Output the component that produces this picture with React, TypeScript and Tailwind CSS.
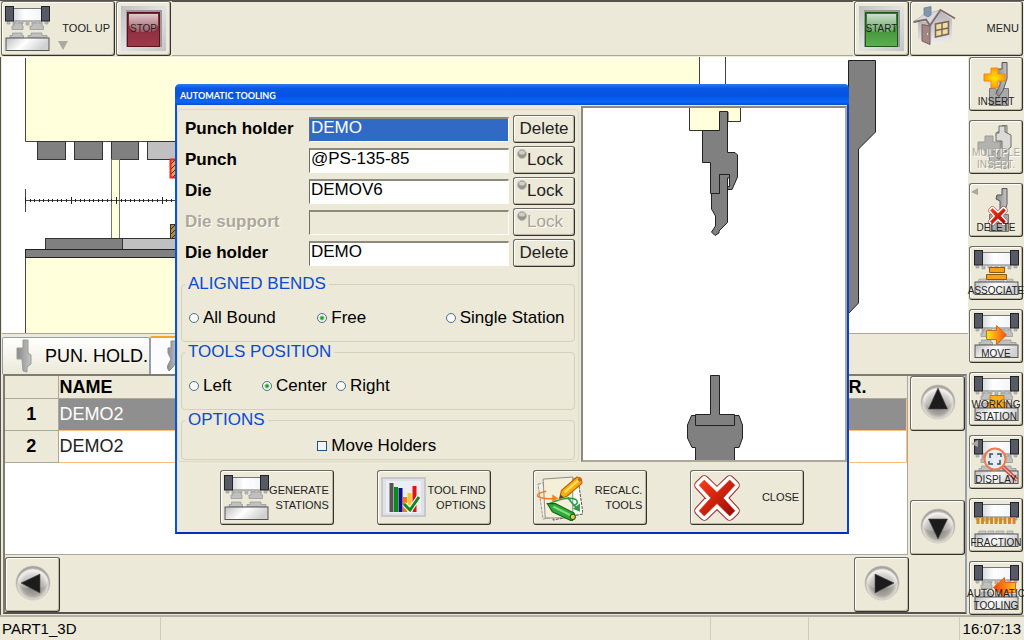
import React from "react";

const face =
  "border border-[#6d6b62] border-r-[#33322e] border-b-[#33322e] rounded-[3px] bg-[#ece9d8] shadow-[inset_1px_1px_0_#ffffff,inset_-1px_-1px_0_#b9b6a4] text-[#222] cursor-default";

function Defs() {
  return (
    <svg className="absolute size-0" aria-hidden="true">
      <defs>
        <linearGradient id="base" x1="0" y1="0" x2="1" y2="0.3">
          <stop offset="0" stopColor="#bdbdbd" />
          <stop offset="0.5" stopColor="#ffffff" />
          <stop offset="1" stopColor="#d0d0d0" />
        </linearGradient>
        <linearGradient id="beam" x1="0" y1="0" x2="1" y2="0">
          <stop offset="0" stopColor="#d6dade" />
          <stop offset="0.4" stopColor="#ffffff" />
          <stop offset="1" stopColor="#f2f4f6" />
        </linearGradient>
        <linearGradient id="fire" x1="0" y1="0" x2="1" y2="0">
          <stop offset="0" stopColor="#ffe81a" />
          <stop offset="1" stopColor="#ff4a12" />
        </linearGradient>
        <linearGradient id="fireBack" x1="0" y1="0" x2="1" y2="0">
          <stop offset="0" stopColor="#ff3c10" />
          <stop offset="1" stopColor="#ffc21a" />
        </linearGradient>
        <linearGradient id="red" x1="0" y1="0" x2="1" y2="1">
          <stop offset="0" stopColor="#ff3a1a" />
          <stop offset="1" stopColor="#990a00" />
        </linearGradient>
        <radialGradient id="plus">
          <stop offset="0" stopColor="#ffe600" />
          <stop offset="1" stopColor="#ff9a10" />
        </radialGradient>
        <radialGradient id="ball" cx="0.5" cy="0.55" r="0.5">
          <stop offset="0" stopColor="#77756f" />
          <stop offset="0.65" stopColor="#a8a69f" />
          <stop offset="0.88" stopColor="#dedcd4" />
          <stop offset="1" stopColor="#a5a39b" />
        </radialGradient>
        <linearGradient id="gloss" x1="0" y1="0" x2="0" y2="1">
          <stop offset="0" stopColor="#ffffff" stopOpacity="0.95" />
          <stop offset="1" stopColor="#ffffff" stopOpacity="0.25" />
        </linearGradient>
        <linearGradient id="frame" x1="0" y1="0" x2="1" y2="1">
          <stop offset="0" stopColor="#bfbfbf" />
          <stop offset="0.5" stopColor="#e2e2e2" />
          <stop offset="1" stopColor="#c4c4c4" />
        </linearGradient>
        <linearGradient id="stopFill" x1="0" y1="0" x2="0" y2="1">
          <stop offset="0" stopColor="#7e2331" />
          <stop offset="1" stopColor="#9c3a4b" />
        </linearGradient>
        <linearGradient id="startFill" x1="0" y1="0" x2="0" y2="1">
          <stop offset="0" stopColor="#2d7a2a" />
          <stop offset="1" stopColor="#5cb04e" />
        </linearGradient>
        <linearGradient id="wall" x1="0" y1="0" x2="0" y2="1">
          <stop offset="0" stopColor="#b4b4b8" />
          <stop offset="1" stopColor="#eeeeec" />
        </linearGradient>
        <linearGradient id="metal" x1="0" y1="0" x2="1" y2="0">
          <stop offset="0" stopColor="#8a8a8a" />
          <stop offset="1" stopColor="#c4c4c4" />
        </linearGradient>
        <pattern id="hatch" width="5" height="5" patternUnits="userSpaceOnUse">
          <path d="M-1 6 L6 -1" stroke="#3a2a10" strokeWidth="1" />
        </pattern>
      </defs>
    </svg>
  );
}

function Press({ children, tools = true }: { children?: React.ReactNode; tools?: boolean }) {
  return (
    <svg viewBox="0 0 45 45" className="size-[45px] shrink-0" aria-hidden="true">
      <rect x="8" y="2.5" width="29" height="12.5" fill="url(#beam)" stroke="#777" />
      <path d="M2 15v3h3v-3M8 15v4h3v-4M14 15v3h4v-3M21 15v4h3v-4M27 15v3h4v-3M34 15v4h3v-4M40 15v3h3v-3" fill="#b8b8b8" stroke="#999" strokeWidth="0.6" />
      <rect x="0.5" y="0.5" width="8" height="14.5" fill="#555a66" stroke="#222" />
      <rect x="36.5" y="0.5" width="8" height="14.5" fill="#555a66" stroke="#222" />
      {tools && (
        <g fill="#c0c0c0" stroke="#999" strokeWidth="0.8">
          <path d="M9 17h8v3h1v3.500H7v-3.500h2zM27 17h10v3h1.500v3.500H25v-3.500h2z" />
          <path d="M7.500 27h9.500v2.500h1.500V32H5v-2.500h2.500zM26 27h11v2.500h5V32H23v-2.500h3z" />
        </g>
      )}
      {!tools && <path d="M5 29h7v3H4zM14 29h6v3h-6zM22 29h8v3h-8zM33 29h6v3h-6z" fill="#c9c9c9" stroke="#999" strokeWidth="0.6" />}
      <rect x="1" y="32" width="43" height="12.500" fill="url(#base)" stroke="#555" />
      {children}
    </svg>
  );
}

function Cross({ className }: { className: string }) {
  const d = "M5 10 L10 5 L22.500 17 L35 5 L40 10 L28.500 22.500 L40 35 L35 40 L22.500 28 L10 40 L5 35 L16.500 22.500Z";
  return (
    <svg viewBox="0 0 45 45" className={className} aria-hidden="true">
      <path d={d} fill="#fff" stroke="#9e2a2a" strokeWidth="9.500" strokeLinejoin="round" />
      <path d={d} fill="#fff" stroke="#fff" strokeWidth="7.500" strokeLinejoin="round" />
      <path d={d} fill="url(#red)" stroke="url(#red)" strokeWidth="0.600" />
    </svg>
  );
}

function Punch({ children, faded }: { children?: React.ReactNode; faded?: boolean }) {
  return (
    <svg viewBox="0 0 45 45" className="size-[45px] shrink-0" aria-hidden="true" opacity={faded ? 0.75 : 1}>
      <path d="M15.500 27.500h6l3.500 6 4-6h5.500v17h-19z" fill="#a9a9a9" stroke="#777" />
      <path d="M28 1.500h5v16l-4 12-4 6-3-3 4-9V14l-4-2 1-4h5z" fill="url(#metal)" stroke="#555" />
      {children}
    </svg>
  );
}

function Lamp({ kind }: { kind: "stop" | "start" }) {
  return (
    <svg viewBox="0 0 45 45" className="size-[45px]" aria-hidden="true">
      <rect width="45" height="45" fill="url(#frame)" />
      <rect x="5" y="4" width="36" height="37" fill="#9a9a9a" />
      <rect x="6.500" y="6.500" width="32" height="34" fill={kind === "stop" ? "url(#stopFill)" : "url(#startFill)"} stroke={kind === "stop" ? "#5d0f1c" : "#1c5a1c"} />
      <path d="M8 8h29v11q-2 7-8 7H16q-6 0-8-7z" fill="url(#gloss)" opacity="0.8" />
    </svg>
  );
}

function House() {
  return (
    <svg viewBox="0 0 45 45" className="size-[45px]" aria-hidden="true">
      <path d="M5 16l15-1v24l-15-6z" fill="url(#wall)" />
      <path d="M19 16L27 5l12 8v21l-20 5z" fill="url(#wall)" />
      <path d="M0.500 16L10 9l17-5-8 12-2 3-3-5z" fill="#dadadd" stroke="#b5b2b5" strokeWidth="0.800" />
      <path d="M11 2l7-1.500V9l-3 2-4-2z" fill="#8296ab" stroke="#6c7f94" strokeWidth="0.800" />
      <path d="M0.500 16L13 13.500l4 6L27.500 4 42 12.500" fill="none" stroke="#84696b" strokeWidth="1.800" />
      <path d="M9 18.500l8 1.500v18.500l-8-3.500z" fill="#a08684" stroke="#78605f" />
      <path d="M14.500 27v2" stroke="#e9dcb8" strokeWidth="1" />
      <path d="M22.500 18l13-2.500v12.500l-13 3z" fill="#f0dd9a" stroke="#7a6462" strokeWidth="1.600" />
      <path d="M29 17v13M22.500 24.500l13-2.500" stroke="#7a6462" strokeWidth="1.400" />
    </svg>
  );
}

function Charts() {
  return (
    <svg viewBox="0 0 45 45" className="size-[45px] shrink-0" aria-hidden="true">
      <rect x="1" y="3" width="43" height="38" fill="#dfe1e6" stroke="#c6c8cd" strokeWidth="2" />
      <rect x="5" y="6" width="35" height="32" fill="#eceef2" />
      <path d="M10.500 8v29" stroke="#555" strokeWidth="4" />
      <path d="M15 12v25" stroke="#0c8a16" strokeWidth="4" />
      <path d="M19.500 13v24" stroke="#10108c" strokeWidth="4" />
      <path d="M24 22v15" stroke="#ff7410" strokeWidth="4" />
      <path d="M28.500 18v19" stroke="#ffc62a" strokeWidth="4" />
      <path d="M33.500 11v26" stroke="#e01414" strokeWidth="4" />
      <path d="M23 29l6 6 9-13" fill="none" stroke="#fff" strokeWidth="5" />
      <path d="M23 29l6 6 9-13" fill="none" stroke="#108a20" strokeWidth="3" />
    </svg>
  );
}

function Sheets() {
  return (
    <svg viewBox="0 0 45 45" className="size-[46px] shrink-0" aria-hidden="true">
      <path d="M1 9l31-7 5 35-31 6z" fill="#f4f1e4" stroke="#999" strokeDasharray="3 1" />
      <path d="M12 8l28-5 5 35-29 6z" fill="#fdfcf6" stroke="#555" strokeDasharray="3 1" />
      <path d="M6 4l29-2v40H8z" fill="#f3efd8" stroke="#777" strokeWidth="0.8" />
      <path d="M9 16q-10 2-8 5 4 3 16 2" fill="none" stroke="#ff7a1a" strokeWidth="1.500" />
      <path d="M15 19l6 4-6 3z" fill="#ff7a1a" />
      <path d="M12 28q18-8 26-4 4 4-3 6M30 22q6 8 11 12" fill="none" stroke="#2e9a48" strokeWidth="1.500" />
      <path d="M42 28v8l-7-3z" fill="#2e9a48" />
      <path d="M22 23l2-8L39 2q5 0 5 6L29 21z" fill="#ffac14" stroke="#a86400" />
      <path d="M27 17L42 4" stroke="#ffe25a" strokeWidth="2" />
      <path d="M22 23l1-4 3 3z" fill="#444" />
      <circle cx="42" cy="4.500" r="2" fill="#d65a2a" />
      <path d="M10 28l8 0 18 9q3 4-2 8L15 36z" fill="#2fa83c" stroke="#12611c" />
      <path d="M16 31l18 9" stroke="#8be07a" strokeWidth="2" />
      <circle cx="35" cy="41" r="2.500" fill="#f0c83a" stroke="#12611c" />
    </svg>
  );
}

function ArrowButton({ dir, label }: { dir: "up" | "down" | "left" | "right"; label: string }) {
  const tri = {
    up: "M18 4L27.500 25H8.500z",
    down: "M18 31L8.500 11H27.500z",
    left: "M6 18L25 9V28z",
    right: "M30 18L11 9V28z",
  }[dir];
  return (
    <button type="button" aria-label={label} className={`${face} grid h-[55px] w-[55px] shrink-0 place-items-center pb-1`}>
      <svg viewBox="0 0 36 36" className="size-9" aria-hidden="true">
        <circle cx="18" cy="18" r="17" fill="url(#ball)" stroke="#c4c2b8" strokeWidth="0.6" />
        <path d="M3 15a15.500 14 0 0 1 30 0q-2 8-9 8H12q-7 0-9-8z" fill="url(#gloss)" opacity="0.75" />
        <path d={tri} fill="#1c1c1c" stroke="#4c4c4c" strokeWidth="0.600" />
      </svg>
    </button>
  );
}

function SideButton({ icon, lines, disabled, flag }: { icon: React.ReactNode; lines: string[]; disabled?: boolean; flag?: boolean }) {
  return (
    <button type="button" disabled={disabled} className={`${face} grid h-[54px] w-[54px] shrink-0 grid-cols-[52px]`}>
      <span className="flex justify-center pt-[3px] [grid-area:1/1]">{icon}</span>
      {flag && (
        <svg viewBox="0 0 8 8" className="mt-1 ml-px size-2 [grid-area:1/1]" aria-hidden="true">
          <path d="M0 4L7 0V7z" fill="#aaa89c" />
        </svg>
      )}
      <span
        className={`relative flex flex-col items-center self-end justify-self-center pb-[2px] text-[10px] leading-3 [grid-area:1/1] ${disabled ? "text-[#aca899] [text-shadow:1px_1px_0_#fff]" : "text-[#222]"}`}
      >
        {lines.map((l) => (
          <span key={l}>{l}</span>
        ))}
      </span>
    </button>
  );
}

function MachineView() {
  const ticks = Array.from({ length: 33 }, (_, i) => i);
  return (
    <svg viewBox="2 57 966 276" preserveAspectRatio="xMinYMin slice" className="block h-[276px] w-full bg-white" role="img" aria-label="Machine view">
      <rect x="25.500" y="58" width="674" height="83" fill="#ffffdc" />
      <path d="M25.500 58V141.500H699.500V57M725.500 57V141" fill="none" stroke="#444" />
      <g fill="#808080" stroke="#333">
        <rect x="37.500" y="141.500" width="28" height="18" />
        <rect x="74.500" y="141.500" width="28" height="18" />
        <rect x="111.500" y="141.500" width="27" height="18" />
        <rect x="147.500" y="141.500" width="40" height="18" fill="#c0c0c0" />
      </g>
      <rect x="111.500" y="159.500" width="8" height="79" fill="#ffffdc" stroke="#777" />
      <rect x="170.500" y="159.500" width="20" height="18" fill="#f6a23c" />
      <rect x="170.500" y="159.500" width="20" height="18" fill="url(#hatch)" stroke="#ff1a1a" strokeWidth="2" />
      <path d="M25.500 189V212M25 200.500H180" stroke="#444" />
      {ticks.map((i) => (
        <path key={i} d={i % 10 === 0 ? "M0.500 197V204" : "M0.500 199V202"} transform={`translate(${25 + Math.round(i * 4.55)} 0)`} stroke="#222" />
      ))}
      <rect x="170.500" y="224.500" width="20" height="14" fill="#b98c2c" />
      <rect x="170.500" y="224.500" width="20" height="14" fill="url(#hatch)" stroke="#333" />
      <rect x="45.500" y="238.500" width="77" height="11" fill="#808080" stroke="#333" />
      <rect x="122.500" y="238.500" width="80" height="11" fill="#c0c0c0" stroke="#333" />
      <rect x="25.500" y="249.500" width="674" height="8" fill="#808080" stroke="#222" />
      <path d="M25.500 258H699.500V333H25.500z" fill="#ffffdc" />
      <path d="M25.500 258V333M699.500 258V333" stroke="#444" />
      <path d="M848.500 60.500H875.500V132L858.500 149V303L848.500 313.500z" fill="#808080" stroke="#222" />
    </svg>
  );
}

function ToolPreview() {
  return (
    <svg viewBox="583 108 262 352" preserveAspectRatio="xMidYMid slice" className="block h-full w-full" role="img" aria-label="Tool preview">
      <path d="M689.500 106V130.500H719.500V112H728V121.500H740.500V106z" fill="#ffffdc" stroke="#333" />
      <g fill="#808080" stroke="#222">
        <path d="M702.500 130.500H719.500V111.500H727.500V152.500H735L737.500 155V177L732 189.500H726.500V186.500H729.500V174.500H719.500V193.500H710.500V162.500H702.500z" />
        <path d="M719.500 174.500H729.500V178H727.500V222.500L719 231V233L715 235.500L711.500 232L715.500 226V216L711.500 209V193.500H719.500z" />
        <path d="M695 415.500H691.500L687.500 425V438L692 447.500H695.500V462H734.500V447.500H739L742.500 438V425L739 415.500H735z" />
        <path d="M710.500 375.500H719.500V414.500H734.500V425.500H695.500V414.500H710.500z" />
      </g>
    </svg>
  );
}

const fields = [
  { id: "punch-holder", label: "Punch holder", value: "DEMO", action: "Delete", selected: true },
  { id: "punch", label: "Punch", value: "@PS-135-85", action: "Lock" },
  { id: "die", label: "Die", value: "DEMOV6", action: "Lock" },
  { id: "die-support", label: "Die support", value: "", action: "Lock", disabled: true },
  { id: "die-holder", label: "Die holder", value: "DEMO", action: "Delete" },
];

function Group({ title, children, className }: { title: string; children: React.ReactNode; className: string }) {
  return (
    <fieldset className={`rounded-[4px] border border-[#d3d0bc] pl-[7px] ${className}`}>
      <legend className="-ml-1 px-[3px] leading-5 text-[#0a4bd2]">{title}</legend>
      {children}
    </fieldset>
  );
}

function Radio({ name, label, checked }: { name: string; label: string; checked?: boolean }) {
  return (
    <label className="flex items-center gap-1 whitespace-nowrap">
      <input
        type="radio"
        name={name}
        defaultChecked={checked}
        className="size-[10px] shrink-0 appearance-none rounded-full border border-[#4a708f] bg-[#f8f8f4] checked:bg-[radial-gradient(circle,#21a121_0_1px,#f8f8f4_3px)]"
      />
      {label}
    </label>
  );
}

function DialogButton({ icon, lines }: { icon: React.ReactNode; lines: string[] }) {
  return (
    <button type="button" className={`${face} flex h-[55px] w-[114px] items-center justify-between pr-1 pl-[3px] text-right text-[11px] leading-[15px]`}>
      {icon}
      <span className="flex flex-col whitespace-nowrap">
        {lines.map((l) => (
          <span key={l}>{l}</span>
        ))}
      </span>
    </button>
  );
}

function Dialog() {
  return (
    <section role="dialog" aria-labelledby="dialog-title" className="flex w-[674px] flex-col rounded-t-[5px] border-2 border-t-0 border-[#0a3fd0] border-b-[#0030b8] border-l-[#0855dd] bg-[#ece9d8] text-[17px] text-black">
      <h1
        id="dialog-title"
        className="-mx-[2px] h-[21px] rounded-t-[5px] bg-[linear-gradient(#2a7cf0,#0a58e6_20%,#0553e0_55%,#0667fb_85%,#0a4ccc)] pl-[5px] font-['Lato','Open_Sans',sans-serif] text-[9px] leading-[23px] font-bold text-white"
      >
        AUTOMATIC TOOLING
      </h1>
      <div className="flex gap-[2px]">
        <div className="mt-1 flex min-w-0 flex-1 flex-col rounded-[4px] border border-[#dcd9c6] pr-[3px] pl-[3px]">
          <div className="flex flex-col gap-[3px] pt-[5px] pl-1">
            {fields.map((f) => (
              <div key={f.id} className="flex h-7 items-center">
                <label htmlFor={f.id} className={`w-[124px] shrink-0 font-bold ${f.disabled ? "text-[#aca899] [text-shadow:1px_1px_0_#fff]" : ""}`}>
                  {f.label}
                </label>
                <input
                  id={f.id}
                  type="text"
                  defaultValue={f.value}
                  disabled={f.disabled}
                  className={`h-[25px] min-w-0 flex-1 border-t-2 border-r border-b border-l border-t-[#8c8a7c] border-r-white border-b-white border-l-[#716f64] px-px pb-[3px] outline-none ${f.selected ? "bg-[#316ac5] text-white" : f.disabled ? "bg-[#ece9d8]" : "bg-white"}`}
                />
                <button type="button" disabled={f.disabled} className={`${face} ml-1 flex h-7 w-[62px] shrink-0 px-[3px]`}>
                  {f.action === "Lock" && (
                    <svg viewBox="0 0 10 10" className="mt-[2px] size-[10px]" aria-hidden="true">
                      <circle cx="5" cy="5" r="4.500" fill="#96948e" stroke="#c0beb4" />
                      <ellipse cx="5" cy="3.500" rx="3" ry="2" fill="#d0cec8" />
                    </svg>
                  )}
                  <span className={`self-center ${f.action === "Lock" ? "" : "flex-1 text-center"} ${f.disabled ? "text-[#a5a294] [text-shadow:1px_1px_0_#fff]" : ""}`}>{f.action}</span>
                </button>
              </div>
            ))}
          </div>
          <div className="mt-[7px] flex flex-col">
            <Group title="ALIGNED BENDS" className="h-[68px]">
              <div className="grid grid-cols-3 pt-[11px]">
                <Radio name="bends" label="All Bound" />
                <Radio name="bends" label="Free" checked />
                <Radio name="bends" label="Single Station" />
              </div>
            </Group>
            <Group title="TOOLS POSITION" className="h-[68px]">
              <div className="grid grid-cols-[73px_74px_1fr] pt-[11px]">
                <Radio name="position" label="Left" />
                <Radio name="position" label="Center" checked />
                <Radio name="position" label="Right" />
              </div>
            </Group>
            <Group title="OPTIONS" className="h-[50px]">
              <div className="grid grid-cols-3 pt-[3px]">
                <label className="col-start-2 flex items-center gap-1 whitespace-nowrap">
                  <input type="checkbox" className="size-[10px] shrink-0 appearance-none border border-[#1c5180] bg-[#f4f4f0] checked:bg-[#21a121]" />
                  Move Holders
                </label>
              </div>
            </Group>
          </div>
        </div>
        <div className="mt-[1px] h-[356px] w-[266px] shrink-0 border-2 border-[#8c8a7c] border-r-[#aca899] border-b-[#aca899] bg-white">
          <ToolPreview />
        </div>
      </div>
      <div className="flex justify-evenly pt-2 pb-[7px]">
        <DialogButton icon={<Press />} lines={["GENERATE", "STATIONS"]} />
        <DialogButton icon={<Charts />} lines={["TOOL FIND", "OPTIONS"]} />
        <DialogButton icon={<Sheets />} lines={["RECALC.", "TOOLS"]} />
        <DialogButton icon={<Cross className="size-[46px] shrink-0" />} lines={["CLOSE"]} />
      </div>
    </section>
  );
}

function TopBar() {
  return (
    <header className="flex h-14 items-start gap-px px-px text-[11px]">
      <button type="button" className={`${face} flex h-[55px] w-[114px] items-center pr-1 pl-[3px]`}>
        <Press />
        <svg viewBox="0 0 10 10" className="mb-1 ml-2 size-[10px] self-end" aria-hidden="true">
          <path d="M0 0H10L5 9z" fill="#aaa9a2" />
        </svg>
        <span className="-ml-2 flex-1 text-right whitespace-nowrap">TOOL UP</span>
      </button>
      <button type="button" className={`${face} grid h-[55px] w-[55px] place-items-center text-[10px]`}>
        <span className="[grid-area:1/1]"><Lamp kind="stop" /></span>
        <span className="[grid-area:1/1]">STOP</span>
      </button>
      <div className="h-[55px] flex-1 border-y border-t-[#55534c] border-b-[#aca899]" />
      <button type="button" className={`${face} grid h-[55px] w-[55px] place-items-center text-[10px]`}>
        <span className="[grid-area:1/1]"><Lamp kind="start" /></span>
        <span className="[grid-area:1/1]">START</span>
      </button>
      <button type="button" className={`${face} flex h-[55px] w-[113px] items-center justify-between pr-[3px] pl-[2px]`}>
        <House />
        MENU
      </button>
    </header>
  );
}

function Tabs() {
  return (
    <div role="tablist" className="flex h-[41px] items-end border-t border-[#aca899] text-[18px]">
      <button type="button" role="tab" aria-selected="false" className="flex h-[37px] w-[148px] items-center rounded-t-[2px] border border-b-0 border-[#91a0a8] bg-linear-to-b from-white to-[#ece9d8] pl-3 whitespace-nowrap">
        <svg viewBox="0 0 20 34" className="mr-[10px] h-[34px] w-5 shrink-0" aria-hidden="true">
          <path d="M8 1h5v13l3 2v9l-4 3v5l-4-1-1-12H2V9h6z" fill="url(#metal)" stroke="#9a9a9a" />
        </svg>
        PUN. HOLD.
      </button>
      <button type="button" role="tab" aria-selected="true" aria-label="Punches" className="flex h-[38px] w-[120px] items-center rounded-t-[2px] border border-t-2 border-b-0 border-[#91a0a8] border-t-[#f6a423] bg-[#fcfcfe] pl-4">
        <svg viewBox="0 0 14 34" className="h-[34px] w-[14px]" aria-hidden="true">
          <path d="M4 2h7v18l-5 8-4 4-2-4 4-8-3-6V9h3z" fill="url(#metal)" stroke="#8a8a8a" />
        </svg>
      </button>
    </div>
  );
}

function PartsTable() {
  return (
    <div className="mr-px mb-px ml-px flex flex-1 flex-col border-2 border-[#7d7b72] border-r-[#9a9fa8] border-b-[#55534c]">
      <div className="flex flex-1">
        <div className="flex-1 border-r border-b border-[#aca899] bg-white">
          <table className="w-full table-fixed border-collapse text-left text-[18px] leading-5">
            <thead>
              <tr className="h-[22px] bg-[#ece9d8]">
                <th className="w-[53px] border-r border-b border-[#aca899] p-0" />
                <th scope="col" className="border-b border-[#aca899] p-0 pl-px">NAME</th>
                <th scope="col" className="w-[60px] border-b border-[#aca899] p-0 pl-[2px]">R.</th>
              </tr>
            </thead>
            <tbody>
              <tr className="h-8 bg-[#8f8f8f] text-white">
                <th scope="row" className="border-r border-b border-[#aca899] bg-[#ece9d8] p-0 text-center text-black">1</th>
                <td className="border-b border-[#fbbf80] p-0 pl-px">DEMO2</td>
                <td className="border-r border-b border-[#fbbf80] p-0" />
              </tr>
              <tr className="h-8 text-[#222]">
                <th scope="row" className="border-r border-b border-[#aca899] bg-[#ece9d8] p-0 text-center text-black">2</th>
                <td className="border-b border-[#fbbf80] p-0 pl-px">DEMO2</td>
                <td className="border-r border-b border-[#fbbf80] p-0" />
              </tr>
            </tbody>
          </table>
        </div>
        <div className="ml-[2px] flex flex-col justify-between">
          <ArrowButton dir="up" label="Scroll up" />
          <ArrowButton dir="down" label="Scroll down" />
        </div>
      </div>
      <div className="mr-14 flex justify-between pt-[2px]">
        <ArrowButton dir="left" label="Scroll left" />
        <ArrowButton dir="right" label="Scroll right" />
      </div>
    </div>
  );
}

function SideBar() {
  return (
    <nav className="flex w-14 shrink-0 flex-col gap-[9px] px-px">
      <SideButton
        lines={["INSERT"]}
        icon={<Punch><path d="M17 7h7v6h7v7h-7v7h-7v-7h-7v-7h7z" fill="url(#plus)" stroke="#f08a10" /></Punch>}
      />
      <SideButton
        disabled
        lines={["MULTIPLE", "INSERT."]}
        icon={<Punch faded><path d="M4 18h7v-6h8v6h7v8h-7v6h-8v-6H4z" fill="#a0a0a0" stroke="#808080" /><path d="M25 2h6v6l6 3v12l-5 4-4-3v-7h-6V9h3z" fill="#d6d6d6" stroke="#444" /></Punch>}
      />
      <SideButton flag lines={["DELETE"]} icon={<Punch><svg x="14" y="19" width="20" height="20"><Cross className="size-5" /></svg></Punch>} />
      <SideButton
        lines={["ASSOCIATE"]}
        icon={<Press tools={false}><path d="M15.500 17.500h15v5h-15zM12.500 24.500h20v5h-20z" fill="#f6a01c" stroke="#8a5a10" /></Press>}
      />
      <SideButton
        lines={["MOVE"]}
        icon={<Press><path d="M12.500 17.500h10v-5l10 9.500-10 9.500v-5h-10z" fill="url(#fire)" stroke="#d2691a" /></Press>}
      />
      <SideButton
        lines={["WORKING", "STATION"]}
        icon={<Press><path d="M16 19.500h14v4h-2v3h4v5H14v-5h4v-3h-2z" fill="#ffae1a" stroke="#c57a10" /></Press>}
      />
      <SideButton
        flag
        lines={["DISPLAY"]}
        icon={
          <Press>
            <path d="M29 28l14 13" stroke="#c8443a" strokeWidth="4" />
            <path d="M29 28l14 13" stroke="#f3b0a0" strokeWidth="1.500" />
            <circle cx="21" cy="20" r="10.500" fill="#e6eef6" fillOpacity="0.9" stroke="#ee7a4a" strokeWidth="2" />
            <path d="M16 19v-4h3M23 15h4v3M26 21v4h-3M19 25h-4v-3" fill="none" stroke="#3c4c60" strokeWidth="1.500" />
          </Press>
        }
      />
      <SideButton
        lines={["FRACTION"]}
        icon={<Press tools={false}><path d="M4 15v7M8.500 15v7M13 15v7M17.500 15v7M22 15v7M26.500 15v7M31 15v7M35.500 15v7M40 15v7" stroke="#d98a14" strokeWidth="3" /></Press>}
      />
      <SideButton
        lines={["AUTOMATIC", "TOOLING"]}
        icon={<Press><path d="M41.500 17.500h-11v-5l-11 10 11 10v-5h11z" fill="url(#fireBack)" stroke="#e0641a" /></Press>}
      />
    </nav>
  );
}

export default function App() {
  return (
    <div className="relative flex min-h-screen flex-col overflow-hidden border-t border-[#55534c] bg-[#ece9d8] font-['Liberation_Sans',Arial,sans-serif] text-black">
      <Defs />
      <TopBar />
      <div className="flex flex-1">
        <main className="flex min-w-0 flex-1 flex-col border-l border-[#55534c] pl-px">
          <MachineView />
          <Tabs />
          <PartsTable />
        </main>
        <SideBar />
      </div>
      <footer className="flex h-[27px] items-stretch border-t-2 border-[#b5b2a2] text-[15px] leading-6">
        <span className="w-[161px] border-r border-[#cfccb9] pl-[2px]">PART1_3D</span>
        <span className="flex-1 border-r border-[#cfccb9]" />
        <span className="w-[98px] border-r border-[#cfccb9]" />
        <span className="w-[151px] border-r border-[#cfccb9]" />
        <time className="w-16 pr-[3px] text-right">16:07:13</time>
      </footer>
      <div className="pointer-events-none absolute inset-x-0 top-[83px] flex justify-center">
        <div className="pointer-events-auto">
          <Dialog />
        </div>
      </div>
    </div>
  );
}
